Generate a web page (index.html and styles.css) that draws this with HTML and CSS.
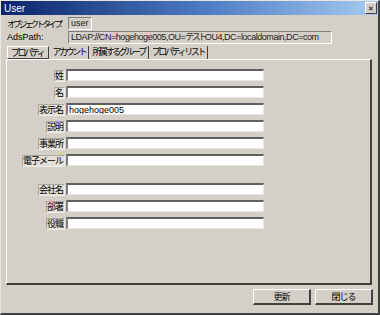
FILE: index.html
```html
<!DOCTYPE html>
<html>
<head>
  <title>User</title>
  <link rel="stylesheet" href="styles.css">
</head>
<body>
  <div class="window">
    <div class="titlebar">
      <span class="title">User</span>
      <span class="close-btn">&#x2715;</span>
    </div>

    <div class="info-row">
      <span class="info-label"><span class="type-label">オブジェクトタイプ</span>:</span>
      <span class="info-value">user</span>
    </div>
    <div class="info-row">
      <span class="info-label">AdsPath:</span>
      <span class="info-value wide">LDAP://CN=hogehoge005,OU=<span class="kana">テスト</span>OU4,DC=localdomain,DC=com</span>
    </div>

    <div class="tabs">
      <span class="tab active">プロパティ</span>
      <span class="tab">アカウント</span>
      <span class="tab">所属するグループ</span>
      <span class="tab">プロパティリスト</span>
    </div>

    <div class="panel">
      <div class="field"><span class="field-label"><span>姓</span></span><input type="text"></div>
      <div class="field"><span class="field-label"><span>名</span></span><input type="text"></div>
      <div class="field"><span class="field-label"><span>表示名</span></span><input type="text" value="hogehoge005"></div>
      <div class="field"><span class="field-label"><span>説明</span></span><input type="text"></div>
      <div class="field"><span class="field-label"><span>事業所</span></span><input type="text"></div>
      <div class="field"><span class="field-label"><span>電子メール</span></span><input type="text"></div>
      <div class="spacer"></div>
      <div class="field"><span class="field-label"><span>会社名</span></span><input type="text"></div>
      <div class="field"><span class="field-label"><span>部署</span></span><input type="text"></div>
      <div class="field"><span class="field-label"><span>役職</span></span><input type="text"></div>
    </div>

    <div class="footer">
      <button>更新</button>
      <button>閉じる</button>
    </div>
  </div>
</body>
</html>
```

FILE: styles.css
```css
body {
  margin: 0;
  font-family: "Noto Sans CJK JP", "DejaVu Sans", sans-serif;
  font-size: 9px;
  color: #000;
  white-space: nowrap;
}

.window {
  width: 380px;
  height: 315px;
  box-sizing: border-box;
  background-color: #d4d0c8;
  border-top: 1px solid #e8e6e0;
  border-left: 1px solid #e8e6e0;
  border-right: 2px solid #404040;
  border-bottom: 2px solid #404040;
  display: flex;
  flex-direction: column;
}

.titlebar {
  height: 14px;
  background: linear-gradient(to right, #0a246a, #4f7dc4 55%, #a6caf0);
  display: flex;
  align-items: center;
  justify-content: space-between;
  padding: 0 1px 0 3px;
}

.title {
  color: #fff;
  font-size: 10px;
  font-family: "Liberation Sans", sans-serif;
}

.close-btn {
  width: 10px;
  height: 10px;
  background-color: #d4d0c8;
  border-top: 1px solid #fff;
  border-left: 1px solid #fff;
  border-right: 1px solid #404040;
  border-bottom: 1px solid #404040;
  font-size: 7px;
  font-weight: bold;
  line-height: 10px;
  text-align: center;
}

.kana {
  letter-spacing: -2.5px;
}

.info-row {
  display: flex;
  align-items: center;
  height: 12px;
  margin-top: 2px;
  padding-left: 6px;
}

.info-row:first-of-type {
  margin-top: 5px;
}

.info-label {
  width: 61px;
  font-family: "Liberation Sans", "Noto Sans CJK JP", sans-serif;
}

.type-label {
  font-family: "Noto Sans CJK JP", sans-serif;
  font-size: 8.5px;
  letter-spacing: -2.6px;
}

.info-value {
  height: 11px;
  line-height: 11px;
  padding: 0 2px;
  border-top: 1px solid #808080;
  border-left: 1px solid #808080;
  border-right: 1px solid #fff;
  border-bottom: 1px solid #fff;
  color: #222;
  font-family: "Liberation Sans", "Noto Sans CJK JP", sans-serif;
  overflow: hidden;
}

.info-value.wide {
  width: 258px;
  letter-spacing: -0.45px;
}

.tabs {
  display: flex;
  margin-top: 3px;
  padding-left: 6px;
  height: 13px;
}

.tab {
  padding: 0 3px;
  line-height: 12px;
  letter-spacing: -2.4px;
  border-right: 1px solid #404040;
}

.tab.active {
  border: 1px solid #404040;
  border-top-color: #fff;
  border-left-color: #fff;
  padding: 0 5px 0 3px;
}

.panel {
  margin: 0 6px 0 5px;
  height: 226px;
  box-sizing: border-box;
  border-top: 1px solid #fff;
  border-left: 1px solid #fff;
  border-right: 2px solid #404040;
  border-bottom: 2px solid #404040;
  padding-top: 9px;
  display: flex;
  flex-direction: column;
  gap: 5px;
}

.field {
  display: flex;
  align-items: center;
  height: 12px;
}

.field-label {
  width: 58px;
  margin-right: 1px;
  text-align: right;
}

.field-label span {
  display: inline-block;
  line-height: 10px;
  padding: 0 1px 0 0;
  letter-spacing: -1px;
  border: 1px solid #aaa69e;
  border-right-color: #f0eee8;
  border-bottom-color: #f0eee8;
  background-color: #e2dfd9;
}

.field input {
  width: 198px;
  height: 12px;
  box-sizing: border-box;
  padding: 0 1px;
  font-family: "Liberation Sans", sans-serif;
  font-size: 9px;
  background-color: #fff;
  border-top: 2px solid #606060;
  border-left: 2px solid #808080;
  border-right: 1px solid #e8e6e0;
  border-bottom: 1px solid #e8e6e0;
  outline: none;
}

.spacer {
  height: 7px;
}

.footer {
  display: flex;
  justify-content: flex-end;
  gap: 4px;
  padding: 4px 5px 0 0;
}

.footer button {
  width: 58px;
  height: 16px;
  padding: 0;
  font-family: "Noto Sans CJK JP", sans-serif;
  font-size: 9px;
  letter-spacing: -1px;
  background-color: #d4d0c8;
  border-top: 1px solid #fff;
  border-left: 1px solid #fff;
  border-right: 2px solid #404040;
  border-bottom: 2px solid #404040;
}
```
